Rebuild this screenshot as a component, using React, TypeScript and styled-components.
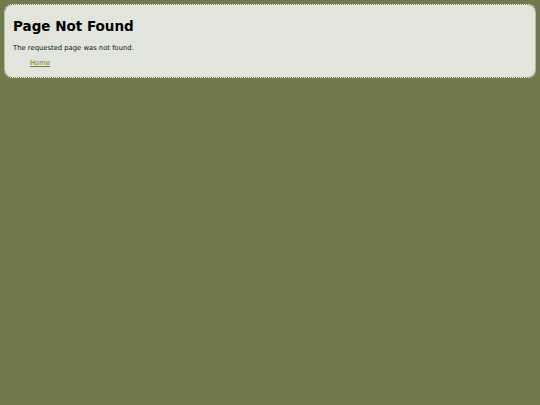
import styled, { createGlobalStyle } from "styled-components";

const Global = createGlobalStyle`
	html, body {
		margin: 0;
		padding: 0;
		background: #727b4d;
	}
	body {
		font-family: "DejaVu Sans", Verdana, sans-serif;
	}
`;

const Page = styled.div`
	padding: 4px;
`;

const Box = styled.div`
	background: #e1e5dc;
	background-clip: padding-box;
	border: 1px dotted #f7f8f3;
	border-radius: 8px;
	padding: 12px 8px 9px 8px;
`;

const Title = styled.h1`
	margin: 0 0 9px 0;
	font-size: 13.5px;
	line-height: 18px;
	font-weight: bold;
	color: #000;
`;

const Text = styled.p`
	margin: 0 0 2px 0;
	font-size: 6.8px;
	line-height: 9px;
	color: #111;
`;

const Links = styled.ul`
	list-style: none;
	margin: 0;
	padding: 0 0 0 17px;
	line-height: 9px;
`;

const Link = styled.a`
	font-size: 6.8px;
	color: #7a7a26;
	text-decoration: underline;
`;

export default function App() {
	return (
		<>
			<Global />
			<Page>
				<Box>
					<Title>Page Not Found</Title>
					<Text>The requested page was not found.</Text>
					<Links>
						<li>
							<Link href="#">Home</Link>
						</li>
					</Links>
				</Box>
			</Page>
		</>
	);
}
